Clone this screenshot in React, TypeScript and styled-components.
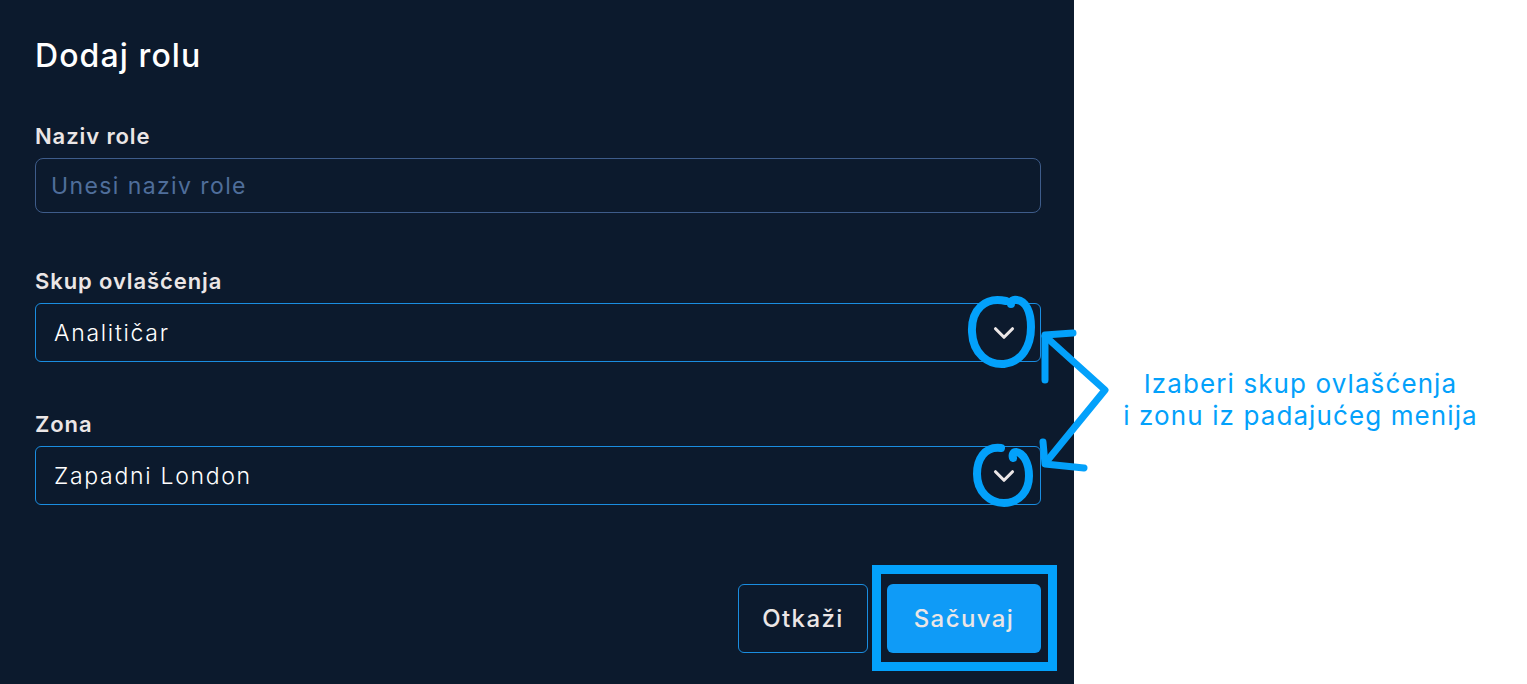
import React from 'react';
import styled, { createGlobalStyle } from 'styled-components';
import { ChevronDown } from 'lucide-react';

const GlobalStyle = createGlobalStyle`
    * {
        box-sizing: border-box;
    }
    body {
        margin: 0;
        background: #ffffff;
        font-family: 'Inter', 'Open Sans', sans-serif;
    }
`;

const ACCENT = '#03a1fb';

//** Hand drawn marks that sit over the form */
const Annotations = () => (
    <Overlay width="1527" height="684" viewBox="0 0 1527 684">
        <g fill="none" stroke={ACCENT} strokeLinecap="round" strokeLinejoin="round">
            <rect x="876.5" y="569.5" width="176" height="97" strokeWidth="9" strokeLinecap="butt" strokeLinejoin="miter" />
            <path
                d="M1006 301 C 985 296, 971 310, 972 332 C 973 354, 988 365, 1004 364 C 1022 362, 1031 346, 1031 327 C 1031 312, 1026 301, 1017 300 C 1013 299, 1011 301, 1011 304"
                strokeWidth="8"
            />
            <path
                d="M1001 448 C 984 446, 977 460, 977 474 C 977 492, 990 503, 1004 503 C 1020 503, 1029 490, 1029 476 C 1029 462, 1023 453, 1016 452 C 1013 452, 1012 455, 1013 458"
                strokeWidth="8"
            />
            <path d="M1073 333 L1045 335 L1045 380" strokeWidth="7" />
            <path d="M1045 336 L1105 390 L1047 461" strokeWidth="7" />
            <path d="M1043 442 L1045 464 L1084 468" strokeWidth="7" />
        </g>
    </Overlay>
);

const SelectField = ({ label, value }: { label: string; value: string }) => (
    <Field>
        <Label>{label}</Label>
        <Select>
            <SelectValue>{value}</SelectValue>
            <ChevronDown size={34} strokeWidth={2.2} color="#ebe6e6" />
        </Select>
    </Field>
);

const App = () => {
    return (
        <>
            <GlobalStyle />
            <Page>
                <Panel>
                    <Title>Dodaj rolu</Title>
                    <Field $top={48}>
                        <Label>Naziv role</Label>
                        <Input placeholder="Unesi naziv role" />
                    </Field>
                    <Spacer $h={56} />
                    <SelectField label="Skup ovlašćenja" value="Analitičar" />
                    <Spacer $h={50} />
                    <SelectField label="Zona" value="Zapadni London" />
                    <Actions>
                        <GhostButton>Otkaži</GhostButton>
                        <PrimaryButton>Sačuvaj</PrimaryButton>
                    </Actions>
                </Panel>
                <Aside>
                    <Note>
                        Izaberi skup ovlašćenja
                        <br />
                        i zonu iz padajućeg menija
                    </Note>
                </Aside>
                <Annotations />
            </Page>
        </>
    );
};

export default App;

const Page = styled.div`
    position: relative;
    display: flex;
    width: 1527px;
    height: 684px;
    overflow: hidden;
`;

const Panel = styled.div`
    width: 1074px;
    height: 100%;
    background: #0c1a2d;
    padding: 36px 33px 0 35px;
    display: flex;
    flex-direction: column;
`;

const Title = styled.h1`
    margin: 0;
    font-size: 32px;
    line-height: 40px;
    font-weight: 500;
    color: #ffffff;
    letter-spacing: 1.1px;
`;

const Field = styled.div<{ $top?: number }>`
    display: flex;
    flex-direction: column;
    gap: 10px;
    margin-top: ${(p) => p.$top ?? 0}px;
`;

const Spacer = styled.div<{ $h: number }>`
    height: ${(p) => p.$h}px;
    flex-shrink: 0;
`;

const Label = styled.label`
    font-size: 22px;
    line-height: 24px;
    font-weight: 600;
    letter-spacing: 0.9px;
    color: #ebe6e6;
`;

const Input = styled.input`
    height: 55px;
    width: 100%;
    background: transparent;
    border: 1px solid #3e5c8a;
    border-radius: 8px;
    padding: 0 15px;
    font-family: inherit;
    font-size: 23px;
    font-weight: 400;
    letter-spacing: 1.4px;
    color: #ffffff;
    outline: none;

    &::placeholder {
        color: #4f6e9b;
    }
`;

const Select = styled.div`
    height: 59px;
    display: flex;
    align-items: center;
    justify-content: space-between;
    border: 1px solid #1a8de0;
    border-radius: 6px;
    padding: 0 19px 0 18px;
`;

const SelectValue = styled.span`
    font-size: 23px;
    font-weight: 300;
    letter-spacing: 1.7px;
    color: #ffffff;
`;

const Actions = styled.div`
    display: flex;
    justify-content: flex-end;
    gap: 19px;
    margin-top: 79px;
`;

const BaseButton = styled.button`
    height: 69px;
    border-radius: 6px;
    font-family: inherit;
    font-size: 24px;
    font-weight: 500;
    letter-spacing: 1.4px;
    color: #ebe6e6;
    cursor: pointer;
`;

const GhostButton = styled(BaseButton)`
    width: 130px;
    background: transparent;
    border: 1px solid #1a8de0;
`;

const PrimaryButton = styled(BaseButton)`
    width: 154px;
    background: #0f9bf7;
    border: none;
`;

const Aside = styled.div`
    flex: 1;
    display: flex;
    justify-content: center;
    padding-top: 368px;
`;

const Note = styled.p`
    margin: 0;
    text-align: center;
    font-size: 26px;
    line-height: 32px;
    font-weight: 400;
    letter-spacing: 1.1px;
    color: ${ACCENT};
`;

const Overlay = styled.svg`
    position: absolute;
    top: 0;
    left: 0;
    pointer-events: none;
`;
